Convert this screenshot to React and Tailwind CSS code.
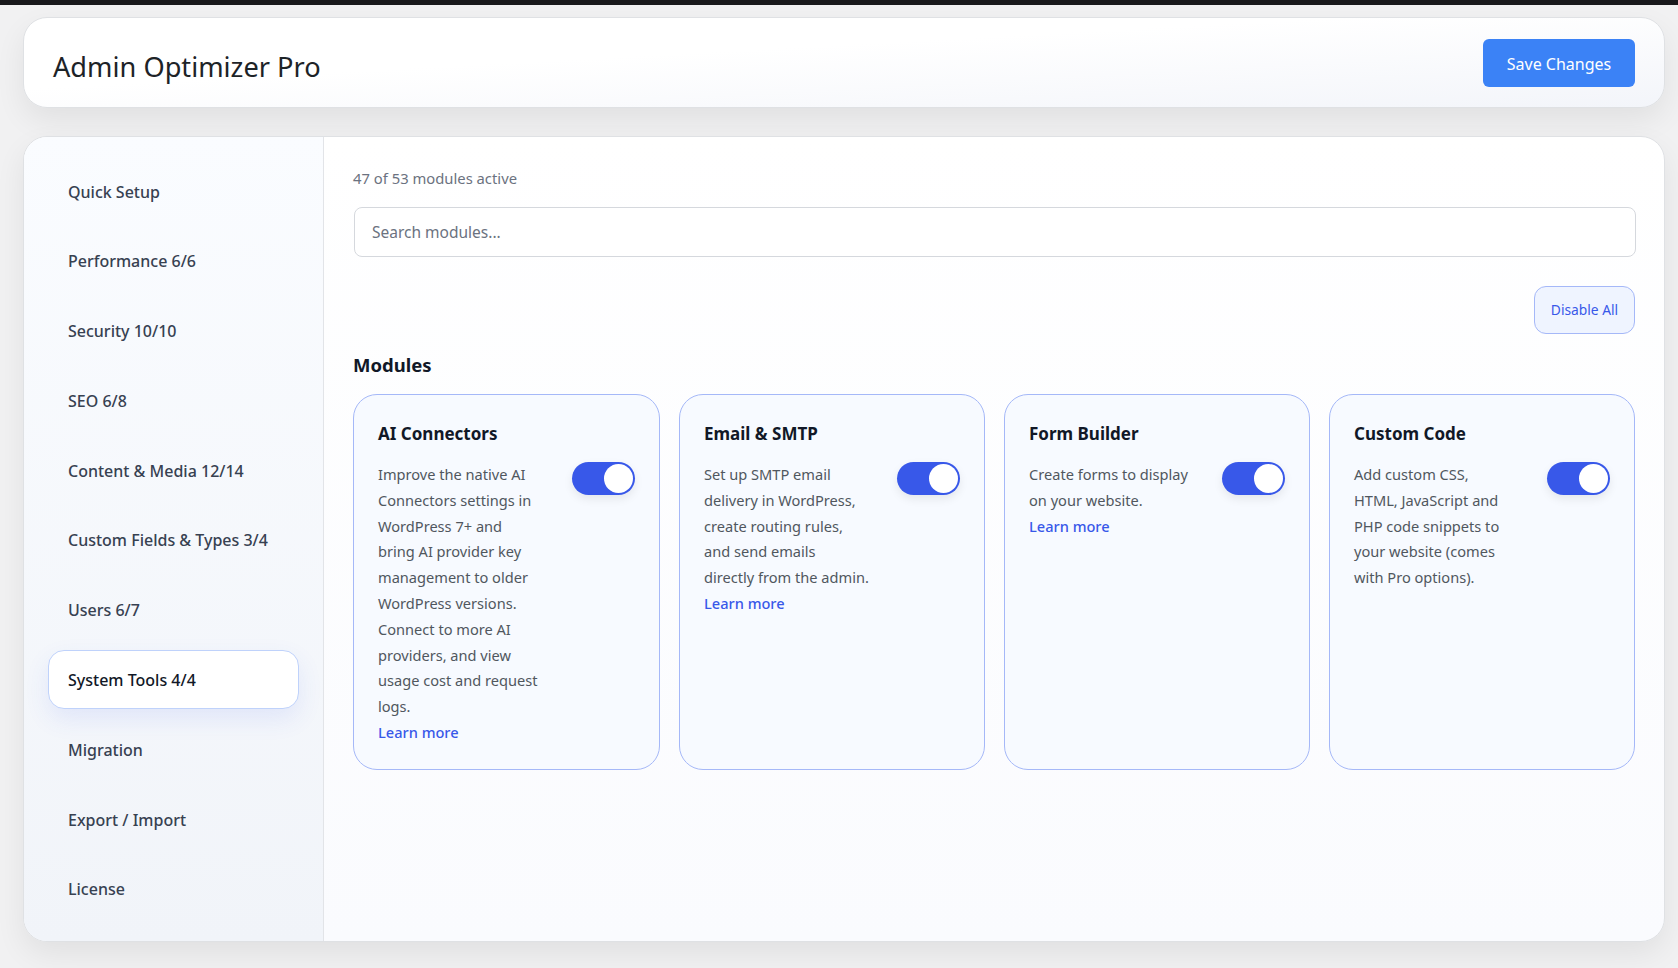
const nav = [
  "Quick Setup",
  "Performance 6/6",
  "Security 10/10",
  "SEO 6/8",
  "Content & Media 12/14",
  "Custom Fields & Types 3/4",
  "Users 6/7",
  "System Tools 4/4",
  "Migration",
  "Export / Import",
  "License",
];

const modules = [
  {
    title: "AI Connectors",
    lines: ["Improve the native AI", "Connectors settings in", "WordPress 7+ and", "bring AI provider key", "management to older", "WordPress versions.", "Connect to more AI", "providers, and view", "usage cost and request", "logs."],
    link: true,
  },
  {
    title: "Email & SMTP",
    lines: ["Set up SMTP email", "delivery in WordPress,", "create routing rules,", "and send emails", "directly from the admin."],
    link: true,
  },
  {
    title: "Form Builder",
    lines: ["Create forms to display", "on your website."],
    link: true,
  },
  {
    title: "Custom Code",
    lines: ["Add custom CSS,", "HTML, JavaScript and", "PHP code snippets to", "your website (comes", "with Pro options)."],
    link: false,
  },
];

function Toggle() {
  return (
    <div className="flex items-center justify-end w-[63px] h-[33px] rounded-full bg-[#3858e9] pr-[2px] shrink-0 shadow-[0_4px_10px_rgba(0,0,0,0.08)]">
      <div className="w-[29px] h-[29px] rounded-full bg-white" />
    </div>
  );
}

export default function App() {
  return (
    <div className="min-h-[968px] bg-[#f1f1f2] font-['Noto_Sans',sans-serif] overflow-hidden">
      <div className="h-[5px] bg-[#18181b]" />
      <div className="pl-[23px] pr-[13px] pt-[12px]">
        <header className="flex items-center justify-between h-[91px] rounded-[24px] border border-[#dfe1e4] bg-gradient-to-br from-white from-40% to-[#f3f5fa] pl-[29px] pr-[29px] shadow-[0_12px_30px_rgba(0,0,0,0.07)]">
          <h1 className="pt-[8px] text-[27.2px] leading-none font-normal text-[#1d2327]">Admin Optimizer Pro</h1>
          <button className="w-[152px] h-[48px] pt-[2px] rounded-[6px] bg-[#3b82f6] text-white text-[16px]">Save Changes</button>
        </header>

        <main className="mt-[28px] flex h-[806px] rounded-[24px] border border-[#dfe1e4] bg-gradient-to-b from-white to-[#fafbfe] shadow-[0_12px_30px_rgba(0,0,0,0.07)] overflow-hidden">
          <aside className="w-[300px] shrink-0 flex flex-col gap-[10.8px] border-r border-[#e2e4e8] bg-gradient-to-b from-[#fafcff] to-[#f1f4f9] pl-[24px] pr-[24px] pt-[24px]">
            {nav.map((item) => {
              const active = item === "System Tools 4/4";
              return (
                <div
                  key={item}
                  className={
                    active
                      ? "flex items-center h-[59px] shrink-0 pl-[19px] pt-[2px] rounded-[16px] border border-[#bfd2fb] bg-white text-[16px] font-medium text-[#111827] shadow-[0_10px_24px_rgba(56,88,233,0.10)]"
                      : "flex items-center h-[59px] shrink-0 pl-[19px] pt-[2px] rounded-[16px] border border-transparent text-[16px] font-medium text-[#374151]"
                  }
                >
                  {item}
                </div>
              );
            })}
          </aside>

          <section className="flex-1 pl-[29px] pr-[29px] pt-[30px]">
            <p className="text-[14.8px] leading-[22px] text-[#6b7280]">47 of 53 modules active</p>
            <input
              placeholder="Search modules..."
              className="block mt-[18px] ml-[1px] w-full h-[50px] rounded-[8px] border border-[#d5d8dd] bg-white px-[17px] text-[15.5px] placeholder:text-[#6b7280] outline-none"
            />
            <div className="flex justify-end mt-[29px]">
              <button className="w-[101px] h-[48px] pt-[1px] rounded-[12px] border border-[#a5b8f8] bg-[#eff4ff] text-[#3858e9] text-[13.8px]">Disable All</button>
            </div>
            <h2 className="mt-[17px] text-[18.5px] leading-[28px] font-bold text-[#111827]">Modules</h2>
            <div className="grid grid-cols-[307px_306px_306px_306px] gap-[19px] mt-[15px]">
              {modules.map((m) => (
                <div key={m.title} className="rounded-[24px] border border-[#a5b8f8] bg-[#f7faff] pl-[24px] pr-[24px] pt-[25px] pb-[23px]">
                  <h3 className="text-[17px] leading-[28px] font-bold text-[#111827]">{m.title}</h3>
                  <div className="flex justify-between gap-[12px] mt-[14px]">
                    <div className="text-[14.6px] leading-[25.8px] text-[#50575e]">
                      {m.lines.map((line) => (
                        <p key={line} className="whitespace-nowrap">{line}</p>
                      ))}
                      {m.link && <a className="font-medium text-[#3858e9]">Learn more</a>}
                    </div>
                    <Toggle />
                  </div>
                </div>
              ))}
            </div>
          </section>
        </main>
      </div>
    </div>
  );
}
